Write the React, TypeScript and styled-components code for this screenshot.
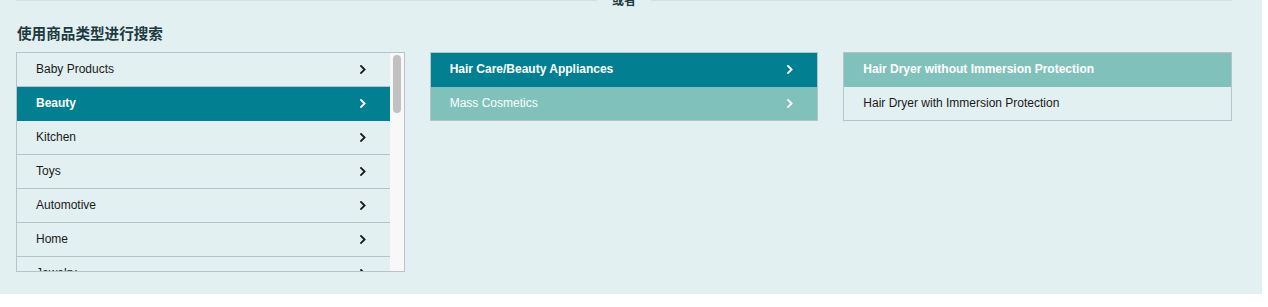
import styled, { createGlobalStyle } from "styled-components"

type Tone = "dark" | "light" | "none"

type Item = {
  label: string
  tone: Tone
  bold?: boolean
  arrow?: boolean
}

const categories = [
  "Baby Products",
  "Beauty",
  "Kitchen",
  "Toys",
  "Automotive",
  "Home",
  "Jewelry",
  "Sports & Outdoors",
  "Clothing",
  "Shoes",
  "Electronics",
  "Computers",
  "Office Products",
  "Pet Supplies",
  "Health & Household",
  "Tools & Home Improvement",
  "Garden & Outdoor",
  "Luggage",
  "Watches",
  "Musical Instruments",
  "Video Games",
  "Industrial & Scientific",
]

const firstList: Item[] = categories.map((c) =>
  c === "Beauty" ? { label: c, tone: "dark", bold: true, arrow: true } : { label: c, tone: "none", arrow: true },
)

const secondList: Item[] = [
  { label: "Hair Care/Beauty Appliances", tone: "dark", bold: true, arrow: true },
  { label: "Mass Cosmetics", tone: "light", arrow: true },
]

const thirdList: Item[] = [
  { label: "Hair Dryer without Immersion Protection", tone: "light", bold: true },
  { label: "Hair Dryer with Immersion Protection", tone: "none" },
]

const GlobalStyle = createGlobalStyle`
  body {
    margin: 0;
    background: #ffffff;
    font-family: "Liberation Sans", Arial, "Noto Sans CJK SC", sans-serif;
  }
`

const Panel = styled.div`
  width: 1262px;
  height: 294px;
  box-sizing: border-box;
  padding: 0 30px 0 16px;
  background: #e3f0f1;
  display: flex;
  flex-direction: column;
  overflow: hidden;
`

const Divider = styled.div`
  display: flex;
  align-items: center;
  gap: 15px;
  margin-top: -7px;
  height: 14px;
`

const Line = styled.div`
  flex: 1;
  height: 1px;
  background: #d3e0e2;
`

const DividerText = styled.span`
  font-family: "Noto Sans CJK SC", sans-serif;
  font-size: 12px;
  font-weight: 700;
  line-height: 14px;
  color: #1d3a41;
`

const Title = styled.h2`
  margin: 16px 0 9px 1px;
  font-family: "Noto Sans CJK SC", sans-serif;
  font-size: 14.6px;
  font-weight: 700;
  line-height: 20px;
  color: #1d3a41;
`

const Columns = styled.div`
  display: grid;
  grid-template-columns: repeat(3, 1fr);
  gap: 25px;
  align-items: start;
`

const List = styled.div<{ $scroll?: boolean }>`
  border: 1px solid #b6c4c7;
  display: flex;
  height: ${(p) => (p.$scroll ? "218px" : "auto")};
`

const Rows = styled.div`
  flex: 1;
  min-width: 0;
  overflow: hidden;
`

const Track = styled.div`
  width: 14px;
  flex-shrink: 0;
  background: #f8f8f8;
  box-sizing: border-box;
  padding: 2px 3px 0 3px;
`

const Thumb = styled.div`
  height: 58px;
  border-radius: 4px;
  background: #c1c1c1;
`

const toneBg: Record<Tone, string> = {
  dark: "#037f92",
  light: "#80c2bb",
  none: "transparent",
}

const Row = styled.div<{ $tone: Tone; $bold?: boolean }>`
  height: 34px;
  box-sizing: border-box;
  display: flex;
  align-items: center;
  justify-content: space-between;
  padding: 0 24px 1px 19px;
  font-size: 12px;
  font-weight: ${(p) => (p.$bold ? 700 : 400)};
  color: ${(p) => (p.$tone === "none" ? "#1a1a1a" : "#ffffff")};
  background: ${(p) => toneBg[p.$tone]};
  border-bottom: 1px solid ${(p) => (p.$tone === "none" ? "#b6c4c7" : toneBg[p.$tone])};
  cursor: pointer;
  white-space: nowrap;

  &:last-child {
    height: 33px;
    border-bottom: none;
  }
`

const Chevron = () => (
  <svg width="6" height="9" viewBox="0 0 6 9" fill="none">
    <path d="M1 1 L4.6 4.5 L1 8" stroke="currentColor" strokeWidth="1.8" strokeLinecap="square" />
  </svg>
)

function CategoryList({ items, scroll }: { items: Item[]; scroll?: boolean }) {
  return (
    <List $scroll={scroll}>
      <Rows>
        {items.map((item) => (
          <Row key={item.label} $tone={item.tone} $bold={item.bold}>
            <span>{item.label}</span>
            {item.arrow && <Chevron />}
          </Row>
        ))}
      </Rows>
      {scroll && (
        <Track>
          <Thumb />
        </Track>
      )}
    </List>
  )
}

export default function App() {
  return (
    <>
      <GlobalStyle />
      <Panel>
        <Divider>
          <Line />
          <DividerText>或者</DividerText>
          <Line />
        </Divider>
        <Title>使用商品类型进行搜索</Title>
        <Columns>
          <CategoryList items={firstList} scroll />
          <CategoryList items={secondList} />
          <CategoryList items={thirdList} />
        </Columns>
      </Panel>
    </>
  )
}
